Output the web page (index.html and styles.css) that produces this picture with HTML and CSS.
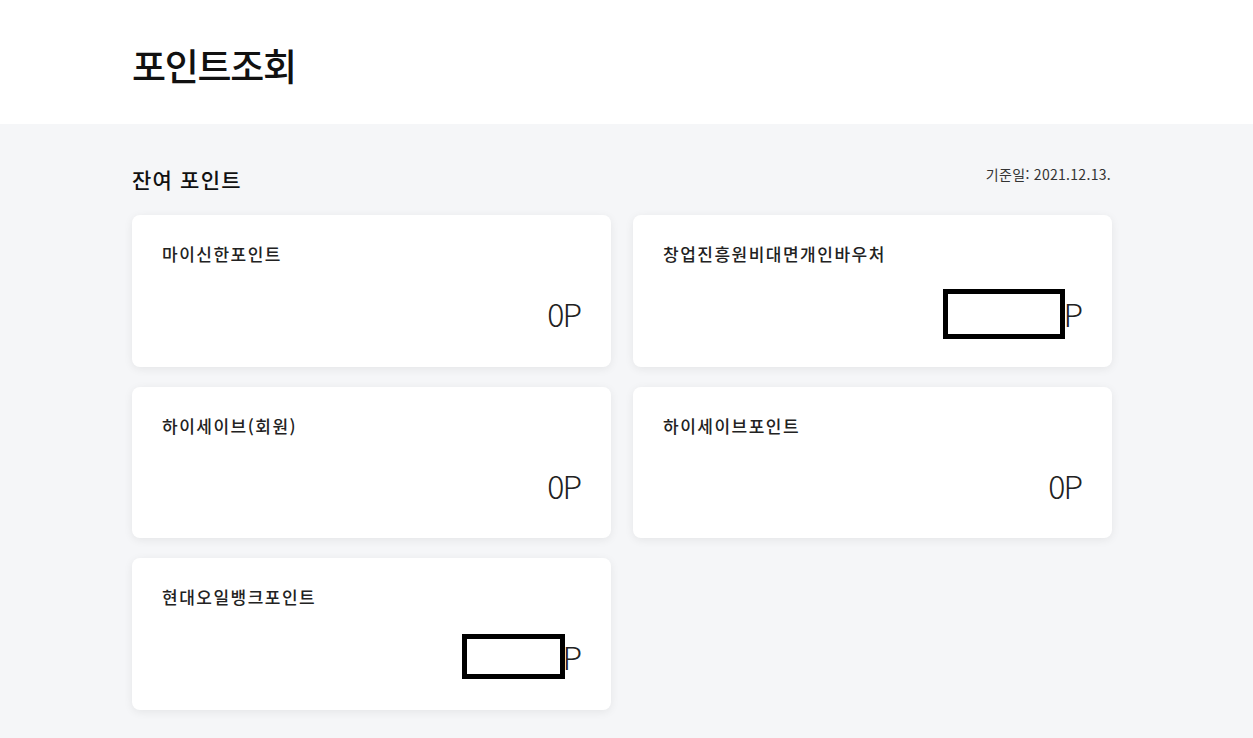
FILE: index.html
```html
<!DOCTYPE html>
<html lang="ko">
<head>
<meta charset="utf-8">
<title>포인트조회</title>
<link rel="stylesheet" href="styles.css">
</head>
<body>
<header class="page-head">
  <h1 class="page-title">포인트조회</h1>
</header>
<main class="content">
  <div class="section-head">
    <h2 class="section-title">잔여 포인트</h2>
    <span class="base-date">기준일: 2021.12.13.</span>
  </div>
  <div class="card-grid">
    <div class="card">
      <div class="card-name">마이신한포인트</div>
      <div class="card-value">0P</div>
    </div>
    <div class="card">
      <div class="card-name">창업진흥원비대면개인바우처</div>
      <div class="card-value"><span class="mask mask-wide"></span>P</div>
    </div>
    <div class="card">
      <div class="card-name">하이세이브(회원)</div>
      <div class="card-value">0P</div>
    </div>
    <div class="card">
      <div class="card-name">하이세이브포인트</div>
      <div class="card-value">0P</div>
    </div>
    <div class="card">
      <div class="card-name">현대오일뱅크포인트</div>
      <div class="card-value"><span class="mask mask-narrow"></span>P</div>
    </div>
  </div>
</main>
</body>
</html>
```

FILE: styles.css
```css
* { box-sizing: border-box; }
html, body {
  margin: 0;
  padding: 0;
}
body {
  font-family: "Noto Sans CJK KR", "Noto Sans", sans-serif;
  color: #1a1a1a;
  background: #f5f6f8;
  min-height: 738px;
}
.page-head {
  background: #ffffff;
  height: 124px;
  padding: 0 132px;
  display: flex;
  align-items: center;
}
.page-title {
  margin: 0;
  font-size: 37px;
  font-weight: 500;
  letter-spacing: -1.3px;
  color: #111;
  line-height: 1;
  padding-top: 6px;
}
.content {
  width: 980px;
  margin: 0 0 0 132px;
  padding-top: 38px;
}
.section-head {
  display: flex;
  justify-content: space-between;
  align-items: flex-start;
  height: 53px;
}
.section-title {
  margin: 0;
  font-size: 21px;
  font-weight: 500;
  letter-spacing: 1.2px;
  color: #111;
  line-height: 34px;
}
.base-date {
  font-size: 14px;
  color: #333;
  letter-spacing: 0.3px;
  line-height: 24px;
  margin-right: 1px;
}
.card-grid {
  display: grid;
  grid-template-columns: 479px 479px;
  column-gap: 22px;
  row-gap: 20px;
}
.card {
  background: #fff;
  border-radius: 8px;
  height: 151.5px;
  padding: 24px 31px 0 30px;
  box-shadow: 0 2px 10px rgba(0, 0, 0, 0.07);
}
.card-name {
  font-size: 17px;
  font-weight: 500;
  letter-spacing: 1.5px;
  color: #222;
  line-height: 30px;
}
.card-value {
  display: flex;
  justify-content: flex-end;
  align-items: center;
  margin-top: 26px;
  height: 36px;
  font-family: "Noto Sans CJK KR", sans-serif;
  font-weight: 300;
  font-size: 32px;
  letter-spacing: -2px;
  color: #222;
  line-height: 36px;
}
.mask {
  display: inline-block;
  background: #fff;
  border: 5px solid #000;
}
.mask-wide {
  width: 122px;
  height: 50px;
  margin-right: -2px;
  margin-top: 1px;
}
.mask-narrow {
  width: 103px;
  height: 45px;
  margin-right: -3px;
}
```
